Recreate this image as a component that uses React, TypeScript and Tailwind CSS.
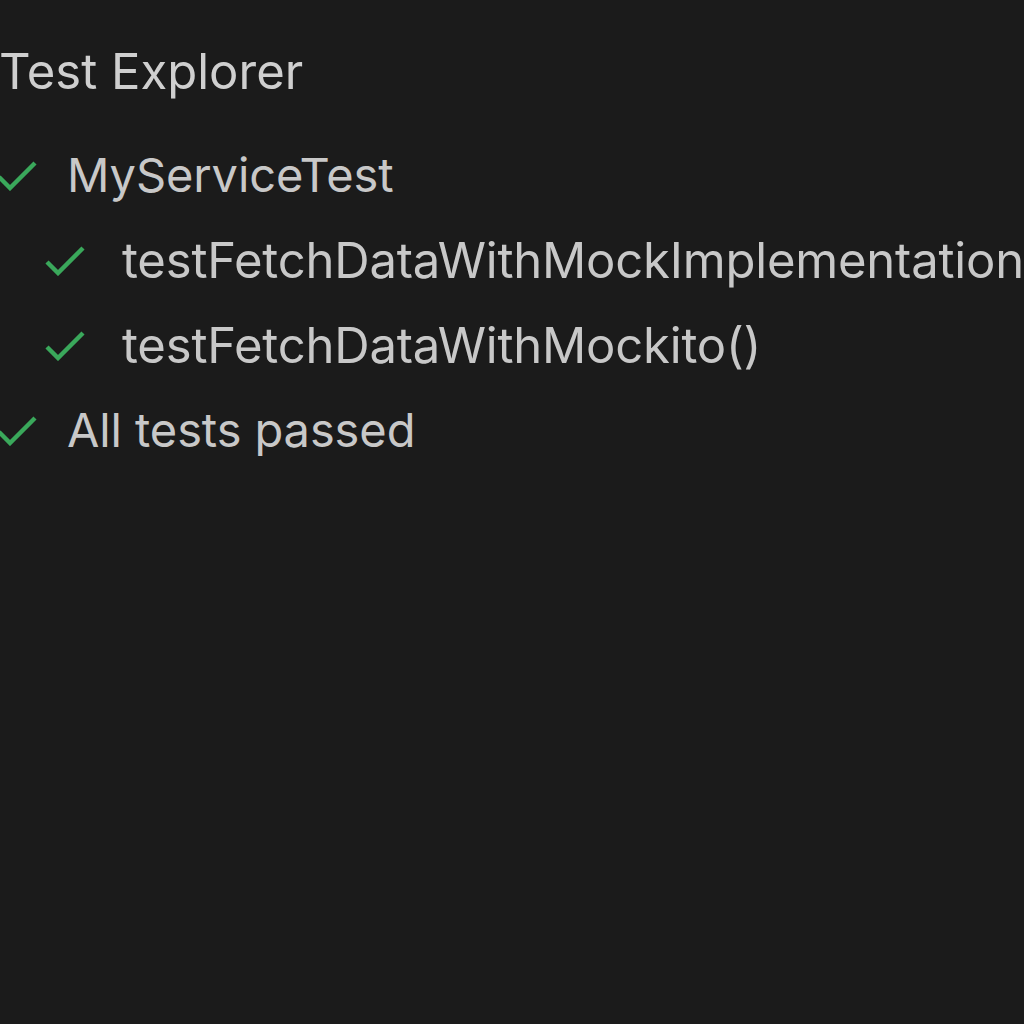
const font = { fontFamily: "Inter, 'Noto Sans', sans-serif" }

function Tick() {
  return (
    <svg viewBox="0 0 40 30" className="w-[40px] h-[30px] shrink-0" fill="none">
      <polyline points="2,16 13,27 38,2" stroke="#3aa85b" strokeWidth={4.4} strokeLinejoin="miter" />
    </svg>
  )
}

function Row({ label, indent }: { label: string; indent?: boolean }) {
  return (
    <div className={`flex items-center h-[85px] whitespace-nowrap ${indent ? "pl-[45px]" : "-ml-[3px]"}`}>
      <Tick />
      <span
        className={`${indent ? "ml-[37px] text-[49px] tracking-[-0.2px]" : "ml-[30px] text-[47px] tracking-[-0.1px]"} text-[#c8c8c8]`}
      >
        {label}
      </span>
    </div>
  )
}

export default function App() {
  return (
    <div className="w-[1024px] h-[1024px] bg-[#1b1b1b] overflow-hidden" style={font}>
      <div className="pt-[40px]">
        <h1 className="text-[49px] leading-[64px] text-[#cfcfcf] font-normal -ml-[1px]">Test Explorer</h1>
        <div className="mt-[29px] flex flex-col">
          <Row label="MyServiceTest" />
          <Row label="testFetchDataWithMockImplementation()" indent />
          <Row label="testFetchDataWithMockito()" indent />
          <Row label="All tests passed" />
        </div>
      </div>
    </div>
  )
}
